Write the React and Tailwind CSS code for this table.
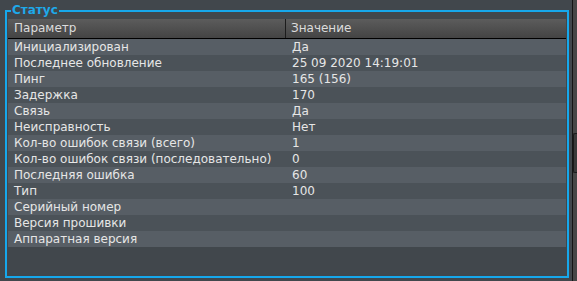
const rows = [
  ['Инициализирован', 'Да'],
  ['Последнее обновление', '25 09 2020 14:19:01'],
  ['Пинг', '165 (156)'],
  ['Задержка', '170'],
  ['Связь', 'Да'],
  ['Неисправность', 'Нет'],
  ['Кол-во ошибок связи (всего)', '1'],
  ['Кол-во ошибок связи (последовательно)', '0'],
  ['Последняя ошибка', '60'],
  ['Тип', '100'],
  ['Серийный номер', ''],
  ['Версия прошивки', ''],
  ['Аппаратная версия', ''],
]

export default function App() {
  return (
    <div
      className="flex h-[281px] w-[577px] overflow-hidden bg-[#41474c] text-[#e6e6e6]"
      style={{ fontFamily: '"DejaVu Sans", "Liberation Sans", sans-serif' }}
    >
      <fieldset className="ml-[5px] mt-[4px] h-[274px] w-[564px] border-2 border-[#16a8ec] px-[1px] pt-[2px]">
        <legend className="ml-[3px] px-[1px] text-[12px] font-bold leading-[13px] text-[#1ea9ea]">
          Статус
        </legend>

        <div className="flex h-[20px] border-b border-black bg-gradient-to-b from-[#5c5c5c] to-[#444444] text-[12px] leading-[19px] text-[#dcdcdc]">
          <div className="w-[278px] border-r border-[#1c1c1c] pl-[6px]">Параметр</div>
          <div className="flex-1 pl-[5px]">Значение</div>
        </div>

        <div className="flex flex-col text-[12px] leading-[16px]">
          {rows.map(([name, value], i) => (
            <div
              key={name}
              className={`flex h-[16px] ${i % 2 === 0 ? 'bg-[#575e65]' : 'bg-[#4b5258]'}`}
            >
              <div className="w-[278px] whitespace-nowrap pl-[6px]">{name}</div>
              <div className="flex-1 whitespace-nowrap pl-[6px]">{value}</div>
            </div>
          ))}
        </div>
      </fieldset>

      <div className="ml-[3px] w-[1px] bg-[#151515]" />
      <div className="flex flex-1 flex-col bg-[#474747] pt-[133px]">
        <div className="h-[40px] rounded-l-[2px] border-l border-y border-[#1a1a1a] bg-[#3a3a3a]" />
      </div>
    </div>
  )
}
